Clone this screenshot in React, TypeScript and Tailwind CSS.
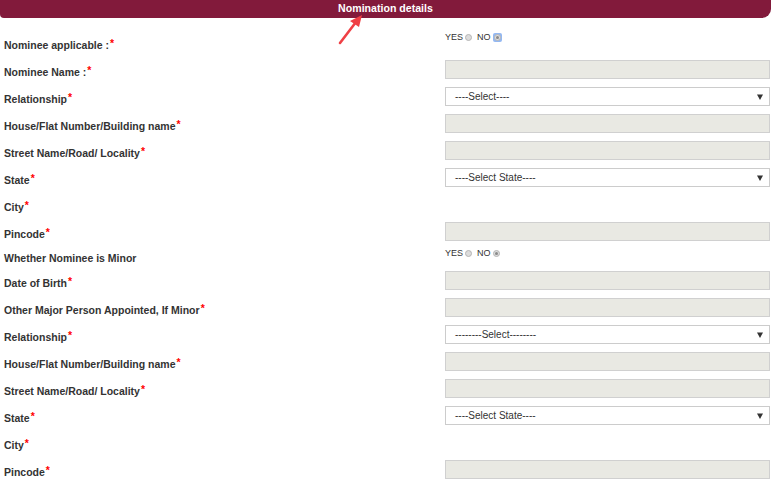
import React from "react";

const Star = () => <span className="text-[#ff0000] relative top-[-2px] ml-[1px]">*</span>;

function Label({ text, star = true, pt = "pt-[4px]" }: { text: string; star?: boolean; pt?: string }) {
  return (
    <div className={`w-[445px] shrink-0 pl-[4px] ${pt} text-[10.5px] leading-[16px] font-bold text-[#333]`}>
      {text}
      {star && <Star />}
    </div>
  );
}

const Input = () => <div className="w-[325px] h-[19px] border border-[#d0d0d0] bg-[#e9e9e3]" />;

const Select = ({ text }: { text: string }) => (
  <div className="w-[325px] h-[19px] border border-[#cccccc] bg-white flex items-center justify-between pl-[9px] pr-[6px] text-[10px] text-[#333]">
    <span>{text}</span>
    <svg width="6" height="6" viewBox="0 0 6 6">
      <path d="M0 0.5 L6 0.5 L3 6 Z" fill="#333" />
    </svg>
  </div>
);

const Radio = ({ checked, focus }: { checked?: boolean; focus?: boolean }) => (
  <span className={`inline-flex items-center justify-center ${focus ? "w-[9px] h-[9px] bg-[#93b8f2] rounded-[2px]" : "w-[7px] h-[7px]"} mx-[2px]`}>
    <span className="w-[7px] h-[7px] rounded-full border border-[#b5b5b5] bg-[#dcdcdc] flex items-center justify-center">
      {checked && <span className="w-[3px] h-[3px] rounded-full bg-[#8a8a8a]" />}
    </span>
  </span>
);

const YesNo = ({ focus }: { focus?: boolean }) => (
  <div className="flex items-center self-start text-[9px] leading-[9px] text-[#333]">
    <span>YES</span>
    <Radio />
    <span className="ml-[3px]">NO</span>
    <Radio checked focus={focus} />
  </div>
);

function Row({ label, star = true, children, h = "h-[27px]", pt }: { label: string; star?: boolean; children?: React.ReactNode; h?: string; pt?: string }) {
  return (
    <div className={`flex items-start ${h}`}>
      <Label text={label} star={star} pt={pt} />
      <div>{children}</div>
    </div>
  );
}

export default function App() {
  return (
    <div className="relative w-[774px] h-[486px] overflow-hidden bg-white font-['Liberation_Sans',Arial,sans-serif]">
      <div className="h-[18px] w-[771px] bg-[#821a3b] rounded-bl-[4px] rounded-br-[9px] flex items-center justify-center text-white font-bold text-[10.6px]">
        Nomination details
      </div>
      <svg className="absolute left-[334px] top-[12px]" width="34" height="36" viewBox="0 0 34 36">
        <line x1="6" y1="31" x2="22" y2="10" stroke="#ef4045" strokeWidth="2.6" strokeLinecap="round" />
        <path d="M28 3 L16 9 L25 15 Z" fill="#ef4045" />
      </svg>
      <div className="mt-[15px]">
        <Row label="Nominee applicable :"><YesNo focus /></Row>
        <Row label="Nominee Name :"><Input /></Row>
        <Row label="Relationship"><Select text="----Select----" /></Row>
        <Row label="House/Flat Number/Building name"><Input /></Row>
        <Row label="Street Name/Road/ Locality"><Input /></Row>
        <Row label="State"><Select text="----Select State----" /></Row>
        <Row label="City" />
        <Row label="Pincode"><Input /></Row>
        <Row label="Whether Nominee is Minor" star={false} h="h-[22px]" pt="pt-[1px]"><YesNo /></Row>
        <Row label="Date of Birth"><Input /></Row>
        <Row label="Other Major Person Appointed, If Minor"><Input /></Row>
        <Row label="Relationship"><Select text="--------Select--------" /></Row>
        <Row label="House/Flat Number/Building name"><Input /></Row>
        <Row label="Street Name/Road/ Locality"><Input /></Row>
        <Row label="State"><Select text="----Select State----" /></Row>
        <Row label="City" />
        <Row label="Pincode"><Input /></Row>
      </div>
    </div>
  );
}
